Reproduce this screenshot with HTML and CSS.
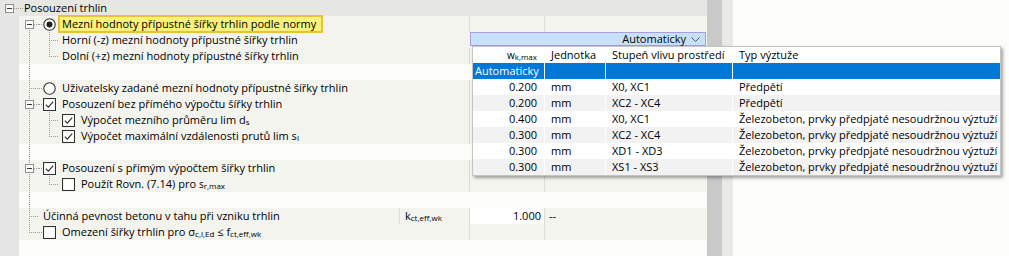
FILE: index.html
```html
<!DOCTYPE html>
<html>
<head>
  <meta charset="utf-8">
  <title>Posouzení trhlin</title>
  <link rel="stylesheet" href="styles.css">
</head>
<body>
  <div class="app">

    <div class="grid">

      <div class="row head">
        <span class="s0 top0"><i class="exp"></i></span>
        <span class="txt t0">Posouzení trhlin</span>
      </div>

      <div class="row">
        <span class="s0"></span>
        <span class="sl x first"><i class="exp"></i></span>
        <span class="c cl cb"><svg class="radio" viewBox="0 0 13 13"><circle cx="6.5" cy="6.5" r="5.7"/><circle class="dot" cx="6.5" cy="6.5" r="3"/></svg></span>
        <span class="txt t2"><span class="hl">Mezní hodnoty přípustné šířky trhlin podle normy</span></span>
        <span class="sym"></span><span class="val"></span><span class="unit"></span>
      </div>

      <div class="row">
        <span class="s0"></span>
        <span class="sl v"></span>
        <span class="sl t"></span>
        <span class="txt t2">Horní (-z) mezní hodnoty přípustné šířky trhlin</span>
        <span class="sym"></span>
        <span class="combo">
          <span class="cbox">Automaticky <svg class="chev" viewBox="0 0 9 5"><path d="M0.5 0.5 L4.5 4.5 L8.5 0.5"/></svg></span>
          <div class="pop">
            <div class="pr ph">
              <span class="p1"><span class="sm">w</span><span class="sb">k,max</span></span>
              <span class="p2">Jednotka</span>
              <span class="p3">Stupeň vlivu prostředí</span>
              <span class="p4">Typ výztuže</span>
            </div>
            <div class="pr sel">
              <span class="p1">Automaticky</span>
              <span class="p2"></span><span class="p3"></span><span class="p4"></span>
            </div>
            <div class="pr">
              <span class="p1">0.200</span><span class="p2">mm</span><span class="p3">X0, XC1</span><span class="p4">Předpětí</span>
            </div>
            <div class="pr alt">
              <span class="p1">0.200</span><span class="p2">mm</span><span class="p3">XC2 - XC4</span><span class="p4">Předpětí</span>
            </div>
            <div class="pr">
              <span class="p1">0.400</span><span class="p2">mm</span><span class="p3">X0, XC1</span><span class="p4">Železobeton, prvky předpjaté nesoudržnou výztuží</span>
            </div>
            <div class="pr alt">
              <span class="p1">0.300</span><span class="p2">mm</span><span class="p3">XC2 - XC4</span><span class="p4">Železobeton, prvky předpjaté nesoudržnou výztuží</span>
            </div>
            <div class="pr">
              <span class="p1">0.300</span><span class="p2">mm</span><span class="p3">XD1 - XD3</span><span class="p4">Železobeton, prvky předpjaté nesoudržnou výztuží</span>
            </div>
            <div class="pr alt">
              <span class="p1">0.300</span><span class="p2">mm</span><span class="p3">XS1 - XS3</span><span class="p4">Železobeton, prvky předpjaté nesoudržnou výztuží</span>
            </div>
          </div>
        </span>
      </div>

      <div class="row">
        <span class="s0"></span>
        <span class="sl v"></span>
        <span class="sl l"></span>
        <span class="txt t2">Dolní (+z) mezní hodnoty přípustné šířky trhlin</span>
        <span class="sym"></span><span class="val"></span><span class="unit"></span>
      </div>

      <div class="row blank">
        <span class="s0"></span>
        <span class="sl v"></span>
      </div>

      <div class="row">
        <span class="s0"></span>
        <span class="sl t"></span>
        <span class="c cl"><svg class="radio" viewBox="0 0 13 13"><circle cx="6.5" cy="6.5" r="5.7"/></svg></span>
        <span class="txt t2">Uživatelsky zadané mezní hodnoty přípustné šířky trhlin</span>
        <span class="sym"></span><span class="val"></span><span class="unit"></span>
      </div>

      <div class="row">
        <span class="s0"></span>
        <span class="sl x"><i class="exp"></i></span>
        <span class="c cl cb"><svg class="check" viewBox="0 0 13 13"><rect x="0.5" y="0.5" width="12" height="12"/><path d="M2.8 6.6 L5.3 9.1 L10.2 3.6"/></svg></span>
        <span class="txt t2">Posouzení bez přímého výpočtu šířky trhlin</span>
        <span class="sym"></span><span class="val"></span><span class="unit"></span>
      </div>

      <div class="row">
        <span class="s0"></span>
        <span class="sl v"></span>
        <span class="sl t"></span>
        <span class="c c3"><svg class="check" viewBox="0 0 13 13"><rect x="0.5" y="0.5" width="12" height="12"/><path d="M2.8 6.6 L5.3 9.1 L10.2 3.6"/></svg></span>
        <span class="txt t2">Výpočet mezního průměru lim d<span class="sb">s</span></span>
        <span class="sym"></span><span class="val"></span><span class="unit"></span>
      </div>

      <div class="row">
        <span class="s0"></span>
        <span class="sl v"></span>
        <span class="sl l"></span>
        <span class="c c3"><svg class="check" viewBox="0 0 13 13"><rect x="0.5" y="0.5" width="12" height="12"/><path d="M2.8 6.6 L5.3 9.1 L10.2 3.6"/></svg></span>
        <span class="txt t2">Výpočet maximální vzdálenosti prutů lim s<span class="sb">l</span></span>
        <span class="sym"></span><span class="val"></span><span class="unit"></span>
      </div>

      <div class="row blank">
        <span class="s0"></span>
        <span class="sl v"></span>
      </div>

      <div class="row">
        <span class="s0"></span>
        <span class="sl x"><i class="exp"></i></span>
        <span class="c cl cb"><svg class="check" viewBox="0 0 13 13"><rect x="0.5" y="0.5" width="12" height="12"/><path d="M2.8 6.6 L5.3 9.1 L10.2 3.6"/></svg></span>
        <span class="txt t2">Posouzení s přímým výpočtem šířky trhlin</span>
        <span class="sym"></span><span class="val"></span><span class="unit"></span>
      </div>

      <div class="row">
        <span class="s0"></span>
        <span class="sl v"></span>
        <span class="sl l"></span>
        <span class="c c3"><svg class="check" viewBox="0 0 13 13"><rect x="0.5" y="0.5" width="12" height="12"/></svg></span>
        <span class="txt t2">Použít Rovn. (7.14) pro <span class="sm">s</span><span class="sb">r,max</span></span>
        <span class="sym"></span><span class="val"></span><span class="unit"></span>
      </div>

      <div class="row blank">
        <span class="s0"></span>
        <span class="sl v"></span>
      </div>

      <div class="row">
        <span class="s0"></span>
        <span class="sl t"></span>
        <span class="txt t1">Účinná pevnost betonu v tahu při vzniku trhlin</span>
        <span class="sym on">k<span class="sb">ct,eff,wk</span></span>
        <span class="val ed">1.000</span>
        <span class="unit">--</span>
      </div>

      <div class="row">
        <span class="s0"></span>
        <span class="sl l"></span>
        <span class="c cl"><svg class="check" viewBox="0 0 13 13"><rect x="0.5" y="0.5" width="12" height="12"/></svg></span>
        <span class="txt t2">Omezení šířky trhlin pro σ<span class="sb">c,l,Ed</span> ≤ f<span class="sb">ct,eff,wk</span></span>
        <span class="sym"></span><span class="val"></span><span class="unit"></span>
      </div>

    </div>

    <div class="scroll"><div class="thumb"></div></div>
    <div class="rest"></div>

  </div>
</body>
</html>
```

FILE: styles.css
```css
*{
  margin: 0;
  padding: 0;
  box-sizing: border-box;
}

body{
  width: 1009px;
  height: 256px;
  overflow: hidden;
  background-color: #fcfcf9;
  font-family: "Open Sans", "Noto Sans", sans-serif;
  font-size: 11px;
  color: #000;
  --ln: #9c9c9c;
  --dv: repeating-linear-gradient(to bottom, var(--ln) 0 1px, transparent 1px 2px);
  --dh: repeating-linear-gradient(to right, var(--ln) 0 1px, transparent 1px 2px);
}

.app{
  display: flex;
  height: 256px;
}

/* property grid */
.grid{
  width: 707px;
  flex: none;
  background: linear-gradient(to right, #e4e4e4 19px, #fcfcf9 19px);
}

.row{
  display: flex;
  height: 16px;
  line-height: 16px;
  white-space: nowrap;
  background-color: #f3f4ee;
}
.row.head{
  background-color: #e6e6e2;
}
.row.blank{
  background-color: #fcfcf9;
}

.s0{
  width: 19px;
  flex: none;
  background-color: #e4e4e4;
}
.s0.top0{
  width: 24px;
  background-color: transparent;
  background-image: var(--dh);
  background-size: 9px 1px;
  background-position: 14px 8px;
  background-repeat: no-repeat;
  padding: 4px 0 0 5px;
}

/* tree slots */
.sl{
  width: 20px;
  height: 16px;
  flex: none;
  background-repeat: no-repeat;
}
.sl.v{
  background-image: var(--dv);
  background-size: 1px 16px;
  background-position: 10px 0;
}
.sl.t{
  background-image: var(--dv), var(--dh);
  background-size: 1px 16px, 10px 1px;
  background-position: 10px 0, 10px 8px;
}
.sl.l{
  background-image: var(--dv), var(--dh);
  background-size: 1px 9px, 10px 1px;
  background-position: 10px 0, 10px 8px;
}
.sl.x{
  padding: 4px 0 0 6px;
  background-image: var(--dv), var(--dh);
  background-size: 1px 16px, 6px 1px;
  background-position: 10px 0, 15px 8px;
}
.sl.x.first{
  background-size: 1px 4px, 6px 1px;
  background-position: 10px 12px, 15px 8px;
}

.exp{
  display: block;
  width: 9px;
  height: 9px;
  border: 1px solid #919191;
  background: linear-gradient(#3c3c3c, #3c3c3c) center / 5px 1px no-repeat, #fafafa;
}

/* radio / check slots */
.c{
  width: 20px;
  height: 16px;
  flex: none;
  padding: 2px 0 0 4px;
  background-repeat: no-repeat;
}
.c.c3{
  width: 19px;
  padding-left: 3px;
}
.c.cl{
  background-image: var(--dh);
  background-size: 4px 1px;
  background-position: 0 8px;
}
.c.cb{
  background-image: var(--dh), var(--dv);
  background-size: 4px 1px, 1px 2px;
  background-position: 0 8px, 10px 14px;
}

.radio, .check{
  display: block;
  width: 13px;
  height: 13px;
  fill: #fff;
  stroke: #303030;
  stroke-width: 1.1;
}
.radio .dot{
  fill: #202020;
  stroke: none;
}
.check path{
  fill: none;
  stroke-width: 1.2;
}

.txt{
  flex: 1;
  min-width: 0;
}
.t0{
  padding-left: 0;
}
.t1{
  padding-left: 4px;
}
.t2{
  padding-left: 3px;
}

.hl{
  display: inline-block;
  height: 18px;
  line-height: 14px;
  margin: -1px 0 0 -4px;
  padding: 0 5px 0 2px;
  border: 2px solid #e6c23c;
  background-color: #f9f27a;
}

.sm{
  font-size: 10px;
}
.sb{
  font-size: 8px;
  position: relative;
  top: 1px;
}

.sym{
  width: 70px;
  flex: none;
  padding-left: 5px;
}
.sym.on{
  border-left: 1px solid #dadad6;
}
.val{
  width: 75px;
  flex: none;
  border-left: 1px solid #dadad6;
  text-align: right;
  padding-right: 3px;
}
.val.ed{
  background-color: #fff;
}
.unit{
  width: 163px;
  flex: none;
  border-left: 1px solid #dadad6;
  padding-left: 4px;
}

/* combo editor + dropdown */
.combo{
  width: 238px;
  flex: none;
  height: 16px;
  position: relative;
  padding: 0 1px;
}
.cbox{
  display: flex;
  justify-content: flex-end;
  align-items: center;
  gap: 5px;
  height: 14px;
  line-height: 12px;
  padding-right: 5px;
  border: 1px solid #a99de0;
  background-color: #c7e2f8;
}
.chev{
  width: 9px;
  height: 5px;
  fill: none;
  stroke: #555;
  stroke-width: 1;
}

.pop{
  position: absolute;
  left: 3px;
  top: 14px;
  width: 529px;
  background-color: #fff;
  border: 1px solid #c4c4c4;
  box-shadow: 2px 2px 3px rgba(0,0,0,0.35);
  z-index: 2;
}
.pr{
  display: flex;
  height: 16px;
  line-height: 16px;
}
.pr.alt{
  background-color: #f2f2f2;
}
.pr.sel{
  background-color: #0078d7;
  color: #fff;
}
.pr span{
  flex: none;
  overflow: hidden;
}
.pr .p1{
  width: 71px;
  text-align: right;
  padding-right: 7px;
}
.pr.sel .p1{
  text-align: left;
  padding-left: 2px;
}
.pr .p2{
  width: 61px;
  padding-left: 6px;
  border-left: 1px solid #fff;
}
.pr .p3{
  width: 127px;
  padding-left: 6px;
  border-left: 1px solid #fff;
}
.pr .p4{
  width: 268px;
  padding-left: 6px;
  border-left: 1px solid #fff;
}
.pr .sb, .pr .sm{
  overflow: visible;
}

/* scrollbar + empty side */
.scroll{
  width: 26px;
  flex: none;
  background-color: #e9e9e7;
}
.thumb{
  width: 15px;
  height: 100%;
  background-color: #c9c9c9;
}
.rest{
  flex: 1;
}
```
